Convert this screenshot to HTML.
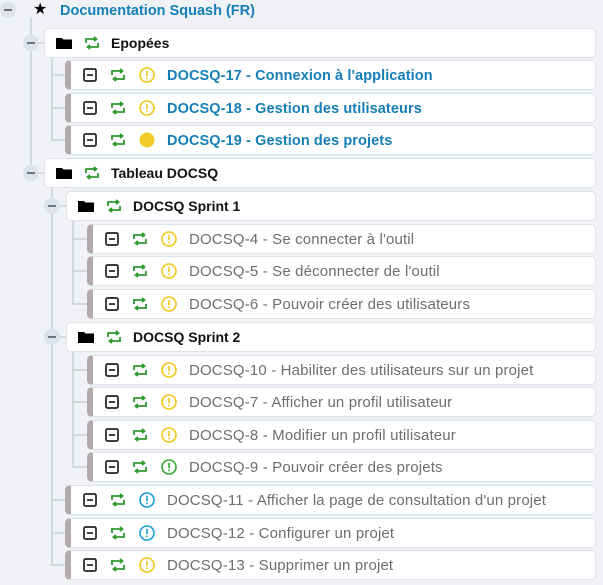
<!DOCTYPE html>
<html><head><meta charset="utf-8"><style>
*{margin:0;padding:0;box-sizing:border-box}
body{width:603px;height:585px;background:#f0f2f5;position:relative;overflow:hidden;font-family:"Liberation Sans",sans-serif;font-size:14px}
.box{position:absolute;height:30px;right:7px;background:#fff;border:1px solid #dde3ea;border-radius:5px}
.req{border-left:6px solid #b3abab}
.t{position:absolute;white-space:nowrap;line-height:16px}
.b{font-weight:bold}
.blue{color:#157fb8;font-size:14.5px;letter-spacing:.1px;margin-top:1px}
.gray{color:#6e6e6e;font-size:15px;letter-spacing:.15px;margin-top:1px}
.blk{color:#111}
.vl{position:absolute;width:2px;background:#d3d9df}
.hl{position:absolute;height:2px;background:#d3d9df}
.exp{position:absolute;width:16px;height:16px;border-radius:50%;background:#dce3ea}
.exp::after{content:"";position:absolute;left:4px;top:7px;width:8px;height:2px;background:#6d7680}
svg{position:absolute}
</style></head><body>
<svg width="0" height="0" style="position:absolute"><defs>
<symbol id="sq" viewBox="0 0 14 14"><rect x="1" y="1" width="12" height="12" rx="1.5" fill="none" stroke="#222" stroke-width="1.7"/><rect x="4" y="6.2" width="6" height="1.7" fill="#222"/></symbol>
<symbol id="rp" viewBox="0 0 16 14"><path d="M2 7V3h10M10 1l2.5 2L10 5M14 7v4H4M6 9l-2.5 2L6 13" fill="none" stroke="#2e9a2e" stroke-width="1.8"/></symbol>
<symbol id="exy" viewBox="0 0 16 16"><circle cx="8" cy="8" r="7" fill="none" stroke="#f2c618" stroke-width="1.6"/><rect x="7.2" y="3.8" width="1.6" height="5.5" fill="#f2c618"/><rect x="7.2" y="10.6" width="1.6" height="1.6" fill="#f2c618"/></symbol>
<symbol id="exg" viewBox="0 0 16 16"><circle cx="8" cy="8" r="7" fill="none" stroke="#2eaa2e" stroke-width="1.6"/><rect x="7.2" y="3.8" width="1.6" height="5.5" fill="#2eaa2e"/><rect x="7.2" y="10.6" width="1.6" height="1.6" fill="#2eaa2e"/></symbol>
<symbol id="exb" viewBox="0 0 16 16"><circle cx="8" cy="8" r="7" fill="none" stroke="#1a9be0" stroke-width="1.6"/><rect x="7.2" y="3.8" width="1.6" height="5.5" fill="#1a9be0"/><rect x="7.2" y="10.6" width="1.6" height="1.6" fill="#1a9be0"/></symbol>
<symbol id="dot" viewBox="0 0 16 16"><circle cx="8" cy="8" r="7.5" fill="#f2cc2a"/></symbol>
<symbol id="fd" viewBox="0 0 16 14"><path d="M0 2h6l1.5 1.5H16V13H0z" fill="#000"/></symbol>
</defs></svg>

<div class="vl" style="left:30px;top:18px;height:156px"></div>
<div class="hl" style="left:30px;top:42px;width:14px"></div>
<div class="hl" style="left:30px;top:172px;width:14px"></div>
<div class="vl" style="left:51px;top:58px;height:83px"></div>
<div class="hl" style="left:51px;top:74px;width:14px"></div>
<div class="hl" style="left:51px;top:107px;width:14px"></div>
<div class="hl" style="left:51px;top:139px;width:14px"></div>
<div class="vl" style="left:51px;top:188px;height:378px"></div>
<div class="hl" style="left:51px;top:205px;width:15px"></div>
<div class="hl" style="left:51px;top:336px;width:15px"></div>
<div class="hl" style="left:51px;top:499px;width:14px"></div>
<div class="hl" style="left:51px;top:532px;width:14px"></div>
<div class="hl" style="left:51px;top:564px;width:14px"></div>
<div class="vl" style="left:72px;top:221px;height:84px"></div>
<div class="hl" style="left:72px;top:238px;width:15px"></div>
<div class="hl" style="left:72px;top:270px;width:15px"></div>
<div class="hl" style="left:72px;top:303px;width:15px"></div>
<div class="vl" style="left:72px;top:352px;height:116px"></div>
<div class="hl" style="left:72px;top:369px;width:15px"></div>
<div class="hl" style="left:72px;top:401px;width:15px"></div>
<div class="hl" style="left:72px;top:434px;width:15px"></div>
<div class="hl" style="left:72px;top:466px;width:15px"></div>

<div class="exp" style="left:0;top:2px"></div>
<div class="exp" style="left:23px;top:35px"></div>
<div class="exp" style="left:23px;top:165px"></div>
<div class="exp" style="left:44px;top:198px"></div>
<div class="exp" style="left:44px;top:329px"></div>

<div class="t" style="left:33px;top:2px;font-size:16px;color:#000">★</div>
<div class="t b" style="left:60px;top:3px;font-size:14.5px;color:#157fb8">Documentation Squash (FR)</div>

<div class="box" style="left:44px;top:28px"></div>
<svg style="left:56px;top:36px" width="16" height="14"><use href="#fd"/></svg>
<svg style="left:84px;top:36px" width="16" height="14"><use href="#rp"/></svg>
<div class="t b blk" style="left:111px;top:35px">Epopées</div>

<div class="box" style="left:44px;top:158px"></div>
<svg style="left:56px;top:166px" width="16" height="14"><use href="#fd"/></svg>
<svg style="left:84px;top:166px" width="16" height="14"><use href="#rp"/></svg>
<div class="t b blk" style="left:111px;top:165px">Tableau DOCSQ</div>

<div class="box" style="left:66px;top:191px"></div>
<svg style="left:78px;top:199px" width="16" height="14"><use href="#fd"/></svg>
<svg style="left:106px;top:199px" width="16" height="14"><use href="#rp"/></svg>
<div class="t b blk" style="left:133px;top:198px">DOCSQ Sprint 1</div>

<div class="box" style="left:66px;top:322px"></div>
<svg style="left:78px;top:330px" width="16" height="14"><use href="#fd"/></svg>
<svg style="left:106px;top:330px" width="16" height="14"><use href="#rp"/></svg>
<div class="t b blk" style="left:133px;top:329px">DOCSQ Sprint 2</div>

<div class="box req" style="left:65px;top:60px"></div>
<svg style="left:83px;top:68px" width="14" height="14"><use href="#sq"/></svg>
<svg style="left:110px;top:68px" width="16" height="14"><use href="#rp"/></svg>
<svg style="left:139px;top:67px" width="16" height="16"><use href="#exy"/></svg>
<div class="t b blue" style="left:167px;top:67px">DOCSQ-17 - Connexion à l'application</div>

<div class="box req" style="left:65px;top:93px"></div>
<svg style="left:83px;top:101px" width="14" height="14"><use href="#sq"/></svg>
<svg style="left:110px;top:101px" width="16" height="14"><use href="#rp"/></svg>
<svg style="left:139px;top:100px" width="16" height="16"><use href="#exy"/></svg>
<div class="t b blue" style="left:167px;top:100px">DOCSQ-18 - Gestion des utilisateurs</div>

<div class="box req" style="left:65px;top:125px"></div>
<svg style="left:83px;top:133px" width="14" height="14"><use href="#sq"/></svg>
<svg style="left:110px;top:133px" width="16" height="14"><use href="#rp"/></svg>
<svg style="left:139px;top:132px" width="16" height="16"><use href="#dot"/></svg>
<div class="t b blue" style="left:167px;top:132px">DOCSQ-19 - Gestion des projets</div>

<div class="box req" style="left:87px;top:224px"></div>
<svg style="left:105px;top:232px" width="14" height="14"><use href="#sq"/></svg>
<svg style="left:132px;top:232px" width="16" height="14"><use href="#rp"/></svg>
<svg style="left:161px;top:231px" width="16" height="16"><use href="#exy"/></svg>
<div class="t gray" style="left:189px;top:231px">DOCSQ-4 - Se connecter à l'outil</div>

<div class="box req" style="left:87px;top:256px"></div>
<svg style="left:105px;top:264px" width="14" height="14"><use href="#sq"/></svg>
<svg style="left:132px;top:264px" width="16" height="14"><use href="#rp"/></svg>
<svg style="left:161px;top:263px" width="16" height="16"><use href="#exy"/></svg>
<div class="t gray" style="left:189px;top:263px">DOCSQ-5 - Se déconnecter de l'outil</div>

<div class="box req" style="left:87px;top:289px"></div>
<svg style="left:105px;top:297px" width="14" height="14"><use href="#sq"/></svg>
<svg style="left:132px;top:297px" width="16" height="14"><use href="#rp"/></svg>
<svg style="left:161px;top:296px" width="16" height="16"><use href="#exy"/></svg>
<div class="t gray" style="left:189px;top:296px">DOCSQ-6 - Pouvoir créer des utilisateurs</div>

<div class="box req" style="left:87px;top:355px"></div>
<svg style="left:105px;top:363px" width="14" height="14"><use href="#sq"/></svg>
<svg style="left:132px;top:363px" width="16" height="14"><use href="#rp"/></svg>
<svg style="left:161px;top:362px" width="16" height="16"><use href="#exy"/></svg>
<div class="t gray" style="left:189px;top:362px">DOCSQ-10 - Habiliter des utilisateurs sur un projet</div>

<div class="box req" style="left:87px;top:387px"></div>
<svg style="left:105px;top:395px" width="14" height="14"><use href="#sq"/></svg>
<svg style="left:132px;top:395px" width="16" height="14"><use href="#rp"/></svg>
<svg style="left:161px;top:394px" width="16" height="16"><use href="#exy"/></svg>
<div class="t gray" style="left:189px;top:394px">DOCSQ-7 - Afficher un profil utilisateur</div>

<div class="box req" style="left:87px;top:420px"></div>
<svg style="left:105px;top:428px" width="14" height="14"><use href="#sq"/></svg>
<svg style="left:132px;top:428px" width="16" height="14"><use href="#rp"/></svg>
<svg style="left:161px;top:427px" width="16" height="16"><use href="#exy"/></svg>
<div class="t gray" style="left:189px;top:427px">DOCSQ-8 - Modifier un profil utilisateur</div>

<div class="box req" style="left:87px;top:452px"></div>
<svg style="left:105px;top:460px" width="14" height="14"><use href="#sq"/></svg>
<svg style="left:132px;top:460px" width="16" height="14"><use href="#rp"/></svg>
<svg style="left:161px;top:459px" width="16" height="16"><use href="#exg"/></svg>
<div class="t gray" style="left:189px;top:459px">DOCSQ-9 - Pouvoir créer des projets</div>

<div class="box req" style="left:65px;top:485px"></div>
<svg style="left:83px;top:493px" width="14" height="14"><use href="#sq"/></svg>
<svg style="left:110px;top:493px" width="16" height="14"><use href="#rp"/></svg>
<svg style="left:139px;top:492px" width="16" height="16"><use href="#exb"/></svg>
<div class="t gray" style="left:167px;top:492px">DOCSQ-11 - Afficher la page de consultation d'un projet</div>

<div class="box req" style="left:65px;top:518px"></div>
<svg style="left:83px;top:526px" width="14" height="14"><use href="#sq"/></svg>
<svg style="left:110px;top:526px" width="16" height="14"><use href="#rp"/></svg>
<svg style="left:139px;top:525px" width="16" height="16"><use href="#exb"/></svg>
<div class="t gray" style="left:167px;top:525px">DOCSQ-12 - Configurer un projet</div>

<div class="box req" style="left:65px;top:550px"></div>
<svg style="left:83px;top:558px" width="14" height="14"><use href="#sq"/></svg>
<svg style="left:110px;top:558px" width="16" height="14"><use href="#rp"/></svg>
<svg style="left:139px;top:557px" width="16" height="16"><use href="#exy"/></svg>
<div class="t gray" style="left:167px;top:557px">DOCSQ-13 - Supprimer un projet</div>
</body></html>
